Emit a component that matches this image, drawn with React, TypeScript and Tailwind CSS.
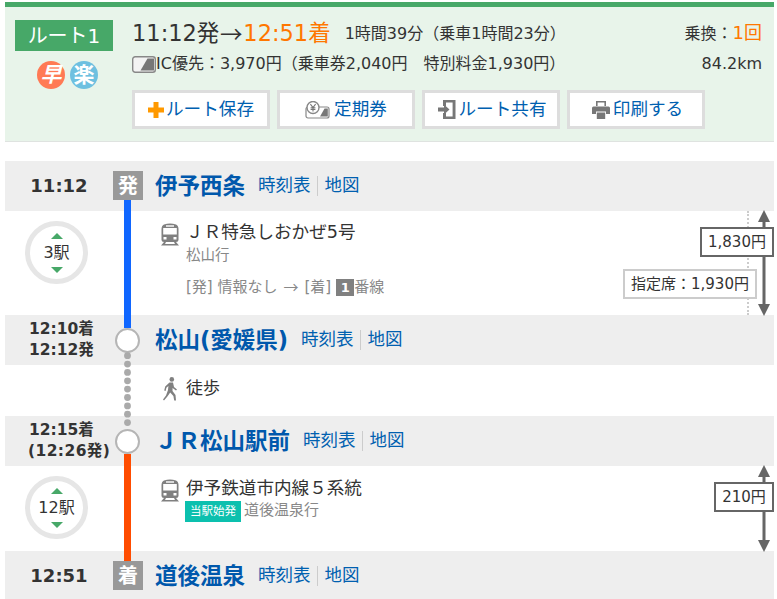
import React from "react";

const TrainIcon = () => (
  <svg width="20" height="23" viewBox="0 0 20 23" className="shrink-0">
    <path d="M4 1.5 Q10 -0.5 16 1.5 Q18.5 2.5 18.5 6 V17 Q18.5 19 16 19 H4 Q1.5 19 1.5 17 V6 Q1.5 2.5 4 1.5Z" fill="#808080" />
    <rect x="3.2" y="5" width="13.6" height="6.5" fill="#fff" />
    <rect x="6" y="2.3" width="8" height="1.4" fill="#fff" />
    <rect x="3.5" y="14" width="3" height="2.5" fill="#fff" />
    <rect x="13.5" y="14" width="3" height="2.5" fill="#fff" />
    <path d="M4 19 L1 22.5 H19 L16 19 H14 L15 21 H5 L6 19Z" fill="#808080" />
  </svg>
);

const WalkIcon = () => (
  <svg width="15" height="24" viewBox="0 0 15 24" className="shrink-0">
    <circle cx="8.8" cy="2.4" r="2.3" fill="#808080" />
    <path d="M6.5 5.5 H10 L11 10 L14 12.5 L13 13.6 L9.6 11 L9.5 14 L12.5 18 L13 23.5 H11.2 L10.4 19 L7.2 15.6 L4.4 19.5 L1 23.5 L0 22.4 L3 18.4 L5 13 L5.4 9 L3.4 10.8 L2.6 14 L1.2 13.6 L2.2 9.6Z" fill="#808080" />
  </svg>
);

const PlusIcon = () => (
  <svg width="16" height="16" viewBox="0 0 16 16" className="shrink-0">
    <rect x="5.5" y="0" width="5" height="16" fill="#ff9900" />
    <rect x="0" y="5.5" width="16" height="5" fill="#ff9900" />
  </svg>
);

const TeikiIcon = () => (
  <svg width="25" height="18" viewBox="0 0 25 18" className="shrink-0">
    <rect x="1" y="6" width="23" height="11" rx="2" fill="#fff" stroke="#888" strokeWidth="1.2" />
    <path d="M15 15.5 L19.5 7.5 H22.8 V15.5Z" fill="#777" />
    <circle cx="8" cy="6.5" r="6" fill="#fff" stroke="#888" strokeWidth="1.4" />
    <path d="M5.4 3.2 L8 6.6 L10.6 3.2 M8 6.6 V10.4 M5.6 6.8 H10.4 M5.6 8.4 H10.4" fill="none" stroke="#777" strokeWidth="1.1" />
  </svg>
);

const ShareIcon = () => (
  <svg width="18" height="19" viewBox="0 0 18 19" className="shrink-0">
    <path d="M5 0 H17.5 V19 H5 V13 H8 V16.4 H14.6 V2.6 H8 V6 H5Z" fill="#777" />
    <path d="M0 7.6 H6 V4.6 L11.5 9.5 L6 14.4 V11.4 H0Z" fill="#777" />
  </svg>
);

const PrintIcon = () => (
  <svg width="18" height="18" viewBox="0 0 18 18" className="shrink-0">
    <path d="M4 0 H14 V5 H12.4 V1.6 H5.6 V5 H4Z" fill="#777" />
    <path d="M1.5 5.5 H16.5 Q18 5.5 18 7 V13 H14 V10.5 H4 V13 H0 V7 Q0 5.5 1.5 5.5Z" fill="#777" />
    <rect x="4.8" y="11.5" width="8.4" height="6.5" fill="#777" />
  </svg>
);

const IcIcon = () => (
  <svg width="24" height="17" viewBox="0 0 24 17" className="shrink-0">
    <rect x="0.7" y="0.7" width="22.6" height="15.6" rx="2.5" fill="#f3f3f3" stroke="#888" strokeWidth="1.4" />
    <path d="M8.5 14.5 L15.5 2.5 H22 V14.5Z" fill="#777" />
  </svg>
);

const Arrow = ({ h }: { h: number }) => (
  <svg width="14" height={h} viewBox={`0 0 14 ${h}`} className="block">
    <rect x="5.5" y="8" width="3" height={h - 16} fill="#666" />
    <path d="M7 0 L13 12 H1Z" fill="#666" />
    <path d={`M7 ${h} L13 ${h - 12} H1 L7 ${h}Z`} fill="#666" />
  </svg>
);

const Links = () => (
  <div className="ml-[13px] flex items-center text-[17.5px] leading-none text-[#0060b0]">
    <span>時刻表</span>
    <span className="ml-[6px] mr-[7px] h-[20px] w-px bg-[#ccc]" />
    <span>地図</span>
  </div>
);

const Name = ({ children }: { children: React.ReactNode }) => (
  <div className="ml-[12px] whitespace-nowrap text-[22.5px] font-bold leading-none text-[#0058ac]">{children}</div>
);

const Sign = ({ children }: { children: React.ReactNode }) => (
  <div className="mt-[10px] flex h-[29px] w-[30px] shrink-0 items-center justify-center bg-[#999] text-[20px] font-bold leading-none text-white">
    {children}
  </div>
);

const Bar = ({ color }: { color: string }) => (
  <div className={`ml-[11px] w-[7px] flex-1 ${color}`} />
);

const Circle = () => (
  <div className="ml-[2px] h-[25px] w-[25px] shrink-0 rounded-full border-2 border-[#b5b5b5] bg-white" />
);

const Stops = ({ n }: { n: string }) => (
  <div className="ml-[20px] mt-[10px] flex h-[63px] w-[63px] flex-col items-center justify-center rounded-full border-[5px] border-[#e6e6e6] text-[16px] leading-none text-[#333]">
    <span className="h-0 w-0 border-x-[6px] border-b-[6px] border-x-transparent border-b-[#47a868]" />
    <span className="my-[6px]">{n}</span>
    <span className="h-0 w-0 border-x-[6px] border-t-[6px] border-x-transparent border-t-[#47a868]" />
  </div>
);

const Btn = ({ icon, label, gap }: { icon: React.ReactNode; label: string; gap: string }) => (
  <div className={`flex h-[39px] w-[138px] items-center justify-center border-[3px] border-[#ddd] bg-white text-[17.6px] leading-none text-[#0060b0] ${gap}`}>
    {icon}
    <span>{label}</span>
  </div>
);

export default function App() {
  return (
    <div className="h-[599px] w-[777px] overflow-hidden bg-white px-[5px] pr-[3px] pt-[2px] font-['DejaVu_Sans','Noto_Sans_CJK_JP',sans-serif] text-[#333]">
      {/* summary */}
      <div className="flex h-[140px] border-b border-t-[5px] border-b-[#dfe3e0] border-t-[#47a868] bg-[#e8f4ea]">
        <div className="ml-[10px] mt-[13px] flex w-[98px] flex-col items-center">
          <div className="flex h-[31px] w-[98px] items-center justify-center bg-[#47a868] text-[20px] leading-none text-white">
            ルート1
          </div>
          <div className="ml-[7px] mt-[10px] flex gap-[5px]">
            <div className="flex h-[28px] w-[28px] items-center justify-center rounded-full bg-[#ff7a55] text-[21px] font-bold italic leading-none text-white">
              早
            </div>
            <div className="flex h-[28px] w-[28px] items-center justify-center rounded-full bg-[#6ec0e0] text-[21px] font-bold leading-none text-white">
              楽
            </div>
          </div>
        </div>
        <div className="ml-[19px] flex flex-1 flex-col pr-[12px] pt-[11px]">
          <div className="flex h-[30px] items-center">
            <span className="flex items-center text-[22.5px] leading-none">
              11:12発
              <span className="w-[24px] text-center font-['Noto_Sans_CJK_JP']">→</span>
              <span className="text-[#ff7700]">12:51着</span>
            </span>
            <span className="ml-[14px] mt-[2px] whitespace-nowrap text-[16px] leading-none">1時間39分（乗車1時間23分）</span>
            <span className="ml-auto whitespace-nowrap text-[16px] leading-none">
              乗換：<span className="text-[18px] text-[#ff7700]">1回</span>
            </span>
          </div>
          <div className="mt-[3px] flex h-[26px] items-center text-[16px] leading-none">
            <IcIcon />
            <span className="whitespace-nowrap">IC優先：3,970円（乗車券2,040円　特別料金1,930円）</span>
            <span className="ml-auto">84.2km</span>
          </div>
          <div className="mt-[13px] flex gap-[7px]">
            <Btn icon={<PlusIcon />} label="ルート保存" gap="gap-[2px]" />
            <Btn icon={<TeikiIcon />} label="定期券" gap="gap-[4px]" />
            <Btn icon={<ShareIcon />} label="ルート共有" gap="gap-[3px] pl-[2px]" />
            <Btn icon={<PrintIcon />} label="印刷する" gap="gap-[3px] pl-[3px]" />
          </div>
        </div>
      </div>

      {/* timeline */}
      <div className="mt-[19px]">
        {/* 伊予西条 */}
        <div className="flex h-[50px] bg-[#eee]">
          <div className="flex w-[108px] items-center justify-center text-[18px] font-bold leading-none">11:12</div>
          <div className="flex w-[30px] flex-col">
            <Sign>発</Sign>
            <Bar color="bg-[#0f66ff]" />
          </div>
          <div className="flex items-center">
            <Name>伊予西条</Name>
            <Links />
          </div>
        </div>

        {/* JR特急 */}
        <div className="relative flex h-[104px]">
          <div className="w-[108px]">
            <Stops n="3駅" />
          </div>
          <div className="flex w-[30px] flex-col">
            <Bar color="bg-[#0f66ff]" />
          </div>
          <div className="ml-[17px] flex pt-[12px]">
            <TrainIcon />
            <div className="ml-[6px] flex flex-col">
              <span className="text-[17.6px] leading-[18px]">ＪＲ特急しおかぜ5号</span>
              <span className="mt-[5px] text-[14.5px] leading-[18px] text-[#888]">松山行</span>
              <span className="mt-[14px] flex items-center whitespace-nowrap text-[15px] leading-[18px] text-[#888]">
                [発] 情報なし
                <span className="mx-[6px] font-['Noto_Sans_CJK_JP']">→</span>
                [着]
                <span className="ml-[5px] flex h-[17px] w-[18px] items-center justify-center bg-[#808080] text-[13px] font-bold leading-none text-white">1</span>
                番線
              </span>
            </div>
          </div>
          <div className="absolute right-[25px] top-0 h-full border-l-2 border-dotted border-[#ccc]" />
          <div className="absolute -top-px right-[3px]">
            <Arrow h={106} />
          </div>
          <div className="absolute right-0 top-[16px] flex h-[30px] w-[74px] items-center justify-center border-2 border-[#666] bg-white text-[15px] leading-none">
            1,830円
          </div>
          <div className="absolute right-[17px] top-[58px] flex h-[30px] w-[134px] items-center justify-center border-2 border-[#ccc] bg-white text-[15px] leading-none">
            指定席：1,930円
          </div>
        </div>

        {/* 松山 */}
        <div className="flex h-[50px] bg-[#eee]">
          <div className="flex w-[108px] flex-col justify-center pl-[24px] text-[15.5px] font-bold leading-[21px]">
            <span>12:10着</span>
            <span>12:12発</span>
          </div>
          <div className="flex w-[30px] flex-col">
            <div className="ml-[11px] h-[13px] w-[7px] bg-[#0f66ff]" />
            <Circle />
          </div>
          <div className="flex items-center">
            <Name>松山(愛媛県)</Name>
            <Links />
          </div>
        </div>

        {/* 徒歩 */}
        <div className="flex h-[51px]">
          <div className="w-[108px]" />
          <div className="relative w-[30px]">
            <svg width="8" height="76" viewBox="0 0 8 76" className="absolute -top-[13px] left-[11px] z-10">
              {[3.7, 12.1, 20.4, 28.8, 37.1, 45.5, 53.9, 62.2, 70.6].map((y) => (
                <circle key={y} cx="3.5" cy={y} r="3.4" fill="#aaa" />
              ))}
            </svg>
          </div>
          <div className="ml-[20px] flex pt-[12px]">
            <WalkIcon />
            <span className="ml-[8px] mt-[2px] text-[17px] leading-[18px]">徒歩</span>
          </div>
        </div>

        {/* JR松山駅前 */}
        <div className="flex h-[50px] bg-[#eee]">
          <div className="flex w-[108px] flex-col justify-center pl-[23px] text-[15.5px] font-bold leading-[21px]">
            <span className="pl-px">12:15着</span>
            <span className="tracking-[0.4px]">(12:26発)</span>
          </div>
          <div className="flex w-[30px] flex-col">
            <div className="mt-[13px]">
              <Circle />
            </div>
            <Bar color="bg-[#ff4c00]" />
          </div>
          <div className="flex items-center">
            <Name>ＪＲ松山駅前</Name>
            <Links />
          </div>
        </div>

        {/* 伊予鉄道 */}
        <div className="relative flex h-[85px]">
          <div className="w-[108px]">
            <Stops n="12駅" />
          </div>
          <div className="flex w-[30px] flex-col">
            <Bar color="bg-[#ff4c00]" />
          </div>
          <div className="ml-[17px] flex pt-[13px]">
            <TrainIcon />
            <div className="ml-[6px] flex flex-col">
              <span className="text-[17.6px] leading-[18px]">伊予鉄道市内線５系統</span>
              <span className="-ml-px mt-[4px] flex items-center text-[15px] leading-[18px] text-[#888]">
                <span className="mr-[3px] flex h-[21px] w-[56px] items-center justify-center bg-[#0cc0ae] text-[11.5px] leading-none text-white">当駅始発</span>
                <span className="-mt-[3px]">道後温泉行</span>
              </span>
            </div>
          </div>
          <div className="absolute -top-px right-[3px]">
            <Arrow h={87} />
          </div>
          <div className="absolute right-0 top-[16px] flex h-[30px] w-[60px] items-center justify-center border-2 border-[#666] bg-white text-[15px] leading-none">
            210円
          </div>
        </div>

        {/* 道後温泉 */}
        <div className="flex h-[50px] bg-[#eee]">
          <div className="flex w-[108px] items-center justify-center text-[18px] font-bold leading-none">12:51</div>
          <div className="flex w-[30px] flex-col">
            <div className="ml-[11px] h-[10px] w-[7px] bg-[#ff4c00]" />
            <div className="flex h-[29px] w-[30px] items-center justify-center bg-[#999] text-[20px] font-bold leading-none text-white">着</div>
          </div>
          <div className="flex items-center">
            <Name>道後温泉</Name>
            <Links />
          </div>
        </div>
      </div>
    </div>
  );
}
